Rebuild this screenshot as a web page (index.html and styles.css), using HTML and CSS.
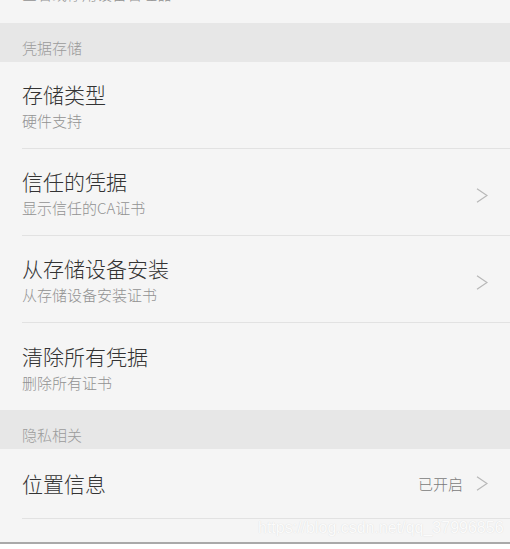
FILE: index.html
```html
<!DOCTYPE html>
<html lang="zh-CN">
<head>
<meta charset="utf-8">
<link rel="stylesheet" href="styles.css">
</head>
<body>
<div class="screen">
  <div class="top-fragment">
    <div class="sub">查看或停用设备管理器</div>
  </div>

  <div class="section">凭据存储</div>

  <div class="row">
    <div class="row-inner">
      <div class="texts">
        <div class="title">存储类型</div>
        <div class="sub">硬件支持</div>
      </div>
    </div>
  </div>
  <div class="row">
    <div class="row-inner">
      <div class="texts">
        <div class="title">信任的凭据</div>
        <div class="sub">显示信任的CA证书</div>
      </div>
      <svg class="chev" viewBox="0 0 12 15" width="12" height="15"><polyline points="1,0.8 11,7.5 1,14.2" fill="none" stroke="#b8b8b8" stroke-width="1.3"/></svg>
    </div>
  </div>
  <div class="row">
    <div class="row-inner">
      <div class="texts">
        <div class="title">从存储设备安装</div>
        <div class="sub">从存储设备安装证书</div>
      </div>
      <svg class="chev" viewBox="0 0 12 15" width="12" height="15"><polyline points="1,0.8 11,7.5 1,14.2" fill="none" stroke="#b8b8b8" stroke-width="1.3"/></svg>
    </div>
  </div>
  <div class="row last">
    <div class="row-inner">
      <div class="texts">
        <div class="title">清除所有凭据</div>
        <div class="sub">删除所有证书</div>
      </div>
    </div>
  </div>

  <div class="section">隐私相关</div>

  <div class="row single">
    <div class="row-inner">
      <div class="title">位置信息</div>
      <div class="right">
        <span class="value">已开启</span>
        <svg class="chev" viewBox="0 0 12 15" width="12" height="15"><polyline points="1,0.8 11,7.5 1,14.2" fill="none" stroke="#b8b8b8" stroke-width="1.3"/></svg>
      </div>
    </div>
  </div>
  <div class="spacer"></div>
  <div class="watermark">https://blog.csdn.net/qq_37996856</div>
</div>
</body>
</html>
```
FILE: styles.css
```css
* { box-sizing: border-box; }
html, body {
  margin: 0;
  padding: 0;
  background: #ffffff;
}
body {
  font-family: "Noto Sans CJK SC", "Noto Sans", sans-serif;
  font-weight: 300;
  width: 510px;
  height: 549px;
  overflow: hidden;
}
.screen {
  position: relative;
  background: #f5f5f5;
  border-bottom: 2px solid #a9a9a9;
}
.top-fragment {
  height: 23px;
  overflow: hidden;
  padding-left: 22px;
}
.top-fragment .sub {
  margin-top: -16px;
}
.section {
  height: 39px;
  background: #e7e7e7;
  padding: 15px 0 0 22px;
  font-size: 15px;
  line-height: 20px;
  color: #9b9b9b;
}
.row {
  padding-left: 22px;
}
.row-inner {
  display: flex;
  align-items: center;
  justify-content: space-between;
  padding-right: 22px;
  border-bottom: 1px solid #e2e2e2;
  height: 87px;
}
.row.last .row-inner {
  border-bottom: none;
}
.texts {
  display: flex;
  flex-direction: column;
  gap: 4px;
  padding-top: 3px;
}
.title {
  font-size: 21px;
  line-height: 25px;
  color: #333333;
}
.sub {
  font-size: 15px;
  line-height: 20px;
  color: #929292;
}
.chev {
  display: block;
  margin-top: 6px;
}
.row.single .row-inner {
  height: 70px;
}
.row.single .chev {
  margin-top: 0;
}
.right {
  display: flex;
  align-items: center;
  gap: 13px;
}
.value {
  font-size: 15px;
  line-height: 20px;
  color: #7a7a7a;
}
.spacer {
  height: 23px;
}
.watermark {
  position: absolute;
  left: 258px;
  top: 518px;
  font-family: "Liberation Sans", Arial, sans-serif;
  font-size: 16px;
  line-height: 20px;
  white-space: nowrap;
  color: #fbfbfb;
  text-shadow: 0 0 1px #d6d6d6;
}
```
